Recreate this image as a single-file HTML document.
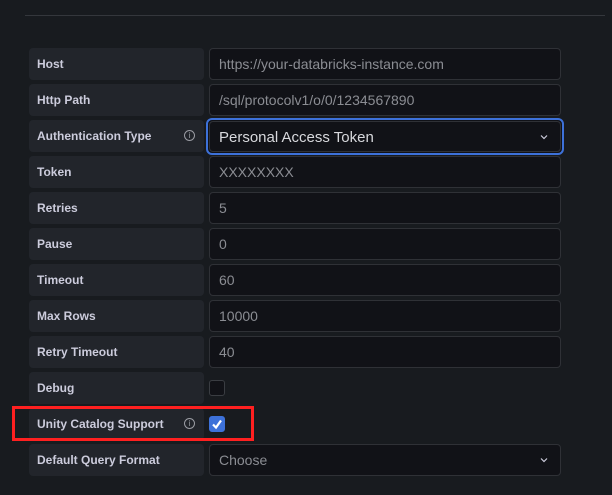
<!DOCTYPE html><html><head><style>
body{margin:0;width:612px;height:495px;background:#181b1f;font-family:"Liberation Sans",sans-serif;position:relative;overflow:hidden}
.sep{position:absolute;left:25px;top:15px;width:580px;height:1px;background:#34373c}
.lab{position:absolute;left:29px;width:175px;height:32px;background:#22252b;border-radius:4px;color:#ccccdc;font-size:12px;font-weight:bold;line-height:32px;padding-left:8px;box-sizing:border-box}
.inp{position:absolute;left:209px;width:352px;height:32px;background:#111217;border:1px solid #2f3136;border-radius:4px;box-sizing:border-box;color:#8b8d93;font-size:14px;line-height:30px;padding-left:9px}
.info{position:absolute;left:184px;width:11px;height:11px;border:1px solid #9a9ca3;border-radius:50%;box-sizing:border-box;font-size:8px;color:#9a9ca3;text-align:center;line-height:9px}
.chev{position:absolute;right:12px;top:12px}
.cb{position:absolute;left:209px;width:16px;height:16px;border:1px solid #3a3d42;border-radius:3px;box-sizing:border-box;background:#111217}
</style></head><body>
<div class="sep"></div>
<div class="lab" style="top:48px">Host</div><div class="inp" style="top:48px">https://your-databricks-instance.com</div>
<div class="lab" style="top:84px">Http Path</div><div class="inp" style="top:84px">/sql/protocolv1/o/0/1234567890</div>
<div class="lab" style="top:120px">Authentication Type</div><div class="info" style="top:130px">i</div>
<div class="inp" style="top:118px;left:206px;width:358px;height:37px;border:2px solid #3d71d9;border-radius:6px;padding:0"><div style="position:absolute;left:1px;top:1px;right:1px;bottom:1px;border:1px solid #2f3136;border-radius:4px;color:#d8d9dd;font-size:15px;line-height:31px;padding-left:9px">Personal Access Token<svg class="chev" width="8" height="6" viewBox="0 0 8 6"><path d="M1 1.5l3 3 3-3" stroke="#ccccdc" stroke-width="1.2" fill="none"/></svg></div></div>
<div class="lab" style="top:156px">Token</div><div class="inp" style="top:156px">XXXXXXXX</div>
<div class="lab" style="top:192px">Retries</div><div class="inp" style="top:192px">5</div>
<div class="lab" style="top:228px">Pause</div><div class="inp" style="top:228px">0</div>
<div class="lab" style="top:264px">Timeout</div><div class="inp" style="top:264px">60</div>
<div class="lab" style="top:300px">Max Rows</div><div class="inp" style="top:300px">10000</div>
<div class="lab" style="top:336px">Retry Timeout</div><div class="inp" style="top:336px">40</div>
<div class="lab" style="top:372px">Debug</div><div class="cb" style="top:380px"></div>
<div class="lab" style="top:408px">Unity Catalog Support</div><div class="info" style="top:418px">i</div>
<div class="cb" style="top:416px;background:#3d71d9;border-color:#3d71d9"><svg width="14" height="14" viewBox="0 0 14 14" style="position:absolute;left:0;top:0"><path d="M3 7.5l3 3 5-7" stroke="#fff" stroke-width="2.2" fill="none"/></svg></div>
<div style="position:absolute;left:12px;top:406px;width:242px;height:35px;border:3px solid #ff2020;box-sizing:border-box"></div>
<div class="lab" style="top:444px">Default Query Format</div><div class="inp" style="top:444px;color:#8b8d93">Choose<svg class="chev" width="8" height="6" viewBox="0 0 8 6"><path d="M1 1.5l3 3 3-3" stroke="#ccccdc" stroke-width="1.2" fill="none"/></svg></div>
</body></html>
